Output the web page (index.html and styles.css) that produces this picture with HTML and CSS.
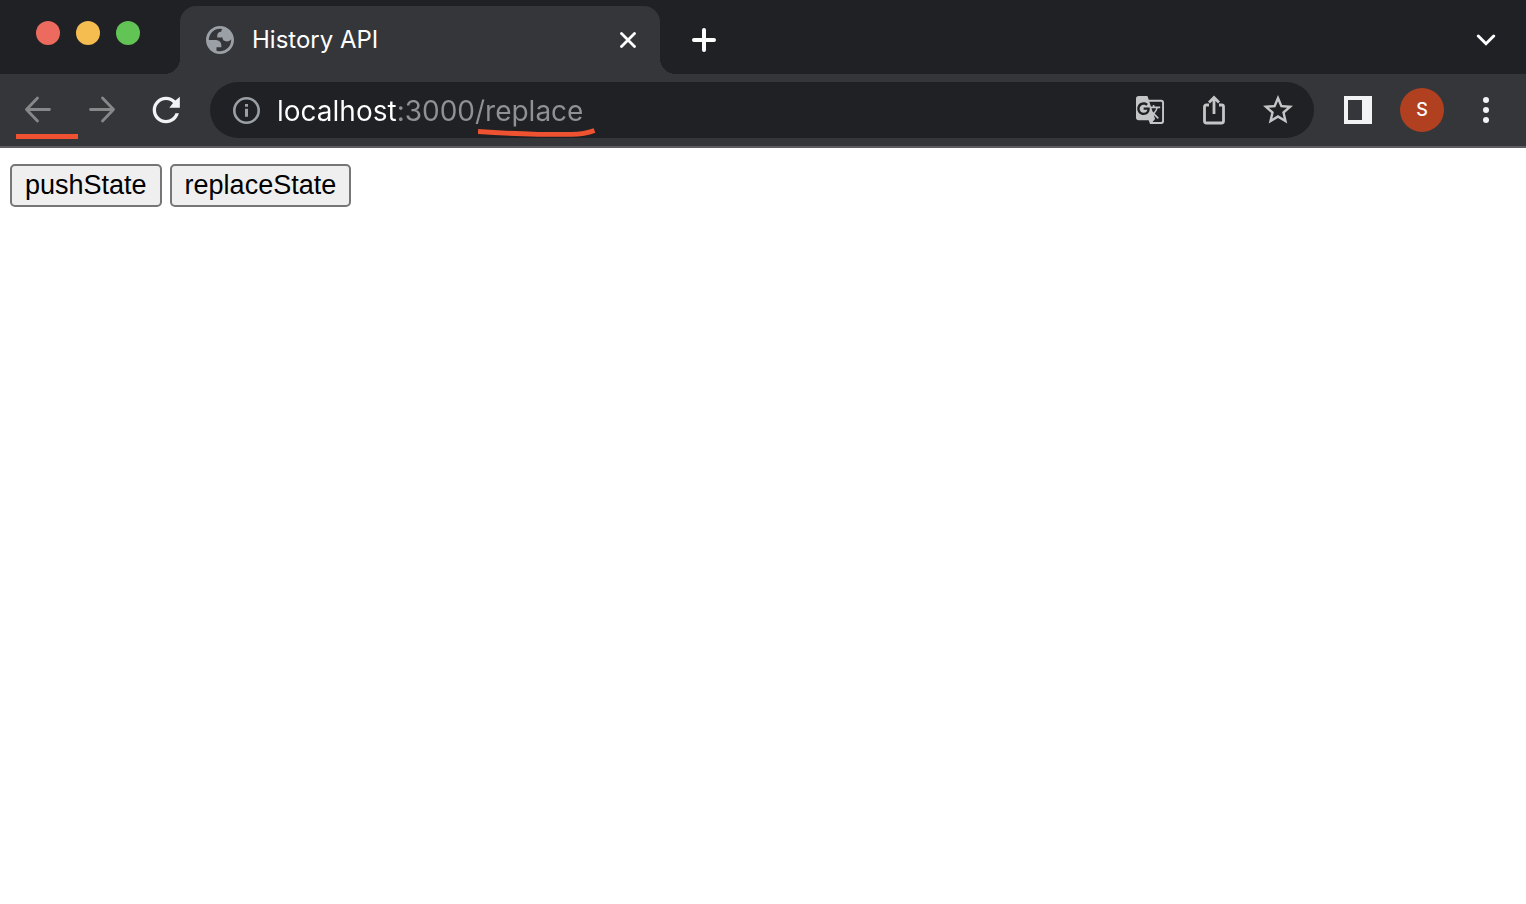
FILE: index.html
```html
<!DOCTYPE html>
<html lang="en">
<head>
  <meta charset="utf-8">
  <meta name="viewport" content="width=device-width,initial-scale=1.0">
  <title>History API</title>
  <link rel="stylesheet" href="styles.css">
</head>
<body>
  <header class="browser">
    <!-- Tab strip -->
    <div class="tab-strip">
      <div class="window-controls">
        <button class="light light-red" aria-label="Close window"></button>
        <button class="light light-yellow" aria-label="Minimize"></button>
        <button class="light light-green" aria-label="Zoom"></button>
      </div>
      <div class="tab">
        <svg class="tab-icon" viewBox="2 2 20 20" width="28" height="28"><path fill="#9aa0a6" fill-rule="evenodd" d="M12 2C6.48 2 2 6.48 2 12s4.48 10 10 10 10-4.48 10-10S17.52 2 12 2zM4 12h4.4c3.407.022 4.922 1.73 4.543 5.127H9.488v2.47a8.004 8.004 0 0010.498-8.083C19.327 12.504 18.332 13 17 13c-2.137 0-3.206-.916-3.206-2.75h-3.748c-.274-2.728.683-4.092 2.87-4.092 0-.975.327-1.597.811-1.97A8.004 8.004 0 004 12z"/></svg>
        <span class="tab-title">History API</span>
        <button class="icon-button tab-close" aria-label="Close tab">
          <svg viewBox="0 0 16 16" width="16" height="16"><path d="M1.5 1.5l13 13M14.5 1.5l-13 13" stroke="#fff" stroke-width="2.8" stroke-linecap="round"/></svg>
        </button>
      </div>
      <button class="icon-button new-tab" aria-label="New tab">
        <svg viewBox="0 0 24 24" width="24" height="24"><path d="M12 2v20M2 12h20" stroke="#fff" stroke-width="4" stroke-linecap="round"/></svg>
      </button>
      <button class="icon-button tab-search" aria-label="Search tabs">
        <svg viewBox="0 0 20 12" width="20" height="12"><path d="M2.3 2l7.7 7.7L17.7 2" fill="none" stroke="#fff" stroke-width="3" stroke-linecap="round"/></svg>
      </button>
    </div>

    <!-- Toolbar -->
    <div class="toolbar">
      <button class="icon-button marked" aria-label="Back">
        <svg viewBox="0 0 28 28" width="28" height="28"><path d="M25.5 13.5H2.5M13.5 2L2.5 13.5l11 11.5" fill="none" stroke="#87888a" stroke-width="2.8" stroke-linecap="round" stroke-linejoin="round"/></svg>
      </button>
      <button class="icon-button" aria-label="Forward">
        <svg viewBox="0 0 28 28" width="28" height="28"><path d="M2.5 13.5h23M14.5 2l11 11.5-11 11.5" fill="none" stroke="#87888a" stroke-width="2.8" stroke-linecap="round" stroke-linejoin="round"/></svg>
      </button>
      <button class="icon-button" aria-label="Reload">
        <svg viewBox="0 0 24 24" width="40" height="40"><path fill="#f1f3f4" d="M17.65 6.35C16.2 4.9 14.21 4 12 4c-4.42 0-7.99 3.58-7.99 8s3.57 8 7.99 8c3.73 0 6.84-2.55 7.73-6h-2.08c-.82 2.33-3.04 4-5.65 4-3.31 0-6-2.69-6-6s2.69-6 6-6c1.66 0 3.14.69 4.22 1.78L14 10.7h6.3V4l-2.65 2.35z"/></svg>
      </button>

      <div class="omnibox">
        <svg class="info-icon" viewBox="0 0 28 28" width="28" height="28"><circle cx="14.5" cy="14.5" r="12.2" fill="none" stroke="#9aa0a6" stroke-width="2.6"/><path fill="#9aa0a6" d="M13 8h3v2.7h-3zM13 12.7h3v8h-3z"/></svg>
        <input class="url" type="text" value="localhost:3000/replace" aria-label="Address" spellcheck="false">
        <button class="icon-button" aria-label="Translate">
          <svg viewBox="1 1 22 22" width="28" height="28"><path fill="#c4c5c6" d="M21 4H11l-1-3H3c-1.1 0-2 .9-2 2v15c0 1.1.9 2 2 2h8l1 3h9c1.1 0 2-.9 2-2V6c0-1.1-.9-2-2-2zM7 16c-2.76 0-5-2.24-5-5s2.24-5 5-5c1.35 0 2.48.5 3.35 1.3L9.03 8.57c-.38-.36-1.04-.78-2.03-.78-1.74 0-3.15 1.44-3.15 3.21S5.26 14.21 7 14.21c2.01 0 2.84-1.44 2.92-2.41H7v-1.71h4.68c.07.31.12.61.12 1.02C11.8 13.97 9.89 16 7 16zm6.17-5.42h3.7c-.43 1.25-1.11 2.43-2.05 3.47-.31-.35-.6-.72-.86-1.1l-.79-2.37zm8.33 9.92c0 .55-.45 1-1 1H14l2-2.5-1.04-3.1 3.1 3.1.92-.92-3.3-3.25.02-.02c1.13-1.25 1.93-2.69 2.4-4.22H20v-1.3h-4.53V8h-1.29v1.29h-1.44L11.46 5.5h9.04c.55 0 1 .45 1 1v14z"/></svg>
        </button>
        <button class="icon-button" aria-label="Share">
          <svg viewBox="0 0 24 30" width="24" height="30"><path d="M7 10H4.300Q2.500 10 2.500 11.800V26Q2.500 28 4.500 28H19.500Q21.500 28 21.500 26V11.800Q21.500 10 19.700 10H17M12 19V3M7 7.500L12 2.500l5 5" fill="none" stroke="#c4c5c6" stroke-width="2.800"/></svg>
        </button>
        <button class="icon-button" aria-label="Bookmark">
          <svg viewBox="0 0 24 24" width="36" height="36"><path fill="#c4c5c6" d="M22 9.24l-7.19-.62L12 2 9.19 8.63 2 9.24l5.46 4.73L5.82 21 12 17.27 18.18 21l-1.63-7.03L22 9.24zM12 15.4l-3.76 2.27 1-4.28-3.32-2.88 4.38-.38L12 6.1l1.71 4.04 4.38.38-3.32 2.88 1 4.28L12 15.4z"/></svg>
        </button>
        <svg class="url-mark" viewBox="0 0 118 10" width="118" height="10"><path d="M0 3.5Q30 5.6 60 6.3H92Q106 6.5 116.5 2.5" fill="none" stroke="#ee5230" stroke-width="4.8"/></svg>
      </div>

      <button class="icon-button" aria-label="Side panel">
        <svg viewBox="0 0 28 28" width="28" height="28"><path fill="#f1f3f4" fill-rule="evenodd" d="M0 0h28v28H0zM4 4v20h14V4z"/></svg>
      </button>
      <button class="icon-button" aria-label="Profile">
        <span class="avatar">S</span>
      </button>
      <button class="icon-button" aria-label="Menu">
        <svg viewBox="0 0 6 26" width="6" height="26" fill="#f1f3f4"><circle cx="3" cy="3" r="3"/><circle cx="3" cy="13" r="3"/><circle cx="3" cy="23" r="3"/></svg>
      </button>
    </div>
  </header>

  <main class="page">
    <button class="state-button">pushState</button>
    <button class="state-button">replaceState</button>
  </main>
</body>
</html>
```
FILE: styles.css
```css
* {
  box-sizing: border-box;
}

body {
  margin: 0;
  background: #fff;
  font-family: Inter, sans-serif;
}

svg {
  display: block;
  flex: none;
}

/* Tab strip */
.tab-strip {
  display: flex;
  align-items: center;
  height: 74px;
  padding: 6px 12px 0 36px;
  background: #202124;
}

.window-controls {
  display: flex;
  gap: 16px;
  width: 144px;
  height: 100%;
  padding-top: 15px;
}

.light {
  width: 24px;
  height: 24px;
  padding: 0;
  border: 0;
  border-radius: 50%;
}

.light-red {
  background: #ed6a5e;
}

.light-yellow {
  background: #f5bd4f;
}

.light-green {
  background: #61c454;
}

.tab {
  position: relative;
  display: flex;
  align-items: center;
  width: 480px;
  height: 68px;
  padding: 0 4px 0 26px;
  border-radius: 16px 16px 0 0;
  background: #35363a;
}

/* Curved feet of the active tab */
.tab::before,
.tab::after {
  content: '';
  position: absolute;
  bottom: 0;
  width: 16px;
  height: 16px;
}

.tab::before {
  right: 100%;
  background: radial-gradient(circle at 0 0, transparent 16px, #35363a 16px);
}

.tab::after {
  left: 100%;
  background: radial-gradient(circle at 100% 0, transparent 16px, #35363a 16px);
}

.tab-title {
  flex: 1;
  padding-left: 18px;
  font-size: 24px;
  line-height: 32px;
  color: #fff;
}

.icon-button {
  display: flex;
  align-items: center;
  justify-content: center;
  flex: none;
  width: 56px;
  height: 56px;
  padding: 0;
  border: 0;
  background: none;
}

.new-tab {
  margin-left: 16px;
}

.tab-search {
  margin-left: auto;
}

/* Toolbar */
.toolbar {
  display: flex;
  align-items: center;
  gap: 8px;
  height: 74px;
  padding: 0 12px 0 10px;
  border-bottom: 2px solid #5f5c62;
  background: #35363a;
}

.marked {
  position: relative;
}

.marked::after {
  content: '';
  position: absolute;
  left: 6px;
  bottom: -1px;
  width: 62px;
  height: 5px;
  background: #ee5230;
}

.omnibox {
  position: relative;
  display: flex;
  align-items: center;
  gap: 8px;
  flex: 1;
  height: 56px;
  margin: 0 8px;
  padding: 0 8px 0 22px;
  border-radius: 28px;
  background: #202124;
}

.url {
  flex: 1;
  min-width: 0;
  height: 40px;
  padding: 2px 0 0 9px;
  border: 0;
  outline: 0;
  font-family: Inter, sans-serif;
  font-size: 28px;
  /* host is white, the rest of the address is dimmed */
  color: transparent;
  background: linear-gradient(to right, #fff 129px, #909194 129px);
  -webkit-background-clip: text;
  background-clip: text;
}

.url-mark {
  position: absolute;
  left: 268px;
  top: 46px;
}

.avatar {
  width: 44px;
  border-radius: 50%;
  background: #b0401f;
  color: #fff;
  font-family: Inter, sans-serif;
  font-size: 18px;
  font-weight: 500;
  line-height: 44px;
  text-align: center;
}

/* Page */
.page {
  display: flex;
  gap: 8px;
  padding: 16px 10px;
}

.state-button {
  height: 43px;
  padding: 0 13px;
  border: 2px solid #767676;
  border-radius: 5px;
  background: #efefef;
  color: #000;
  font-family: "Liberation Sans", Arial, sans-serif;
  font-size: 27px;
}
```
